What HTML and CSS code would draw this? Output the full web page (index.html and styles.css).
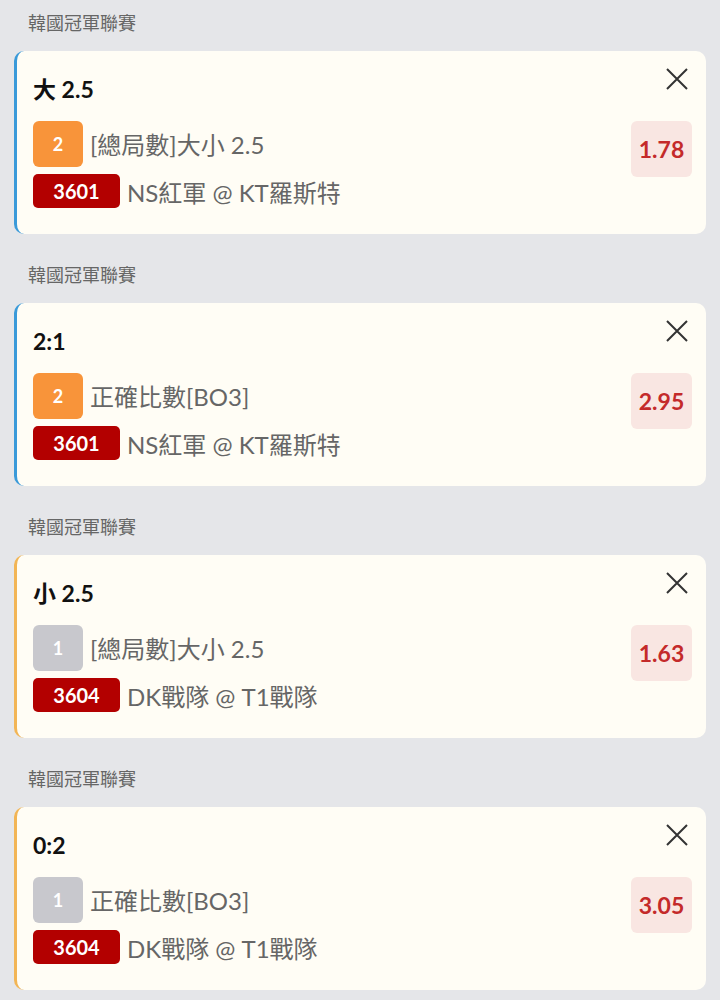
FILE: index.html
```html
<!DOCTYPE html>
<html lang="zh-Hant">
<head>
  <meta charset="UTF-8">
  <meta name="viewport" content="width=device-width, initial-scale=1.0">
  <title>投注單</title>
  <link rel="stylesheet" href="styles.css">
</head>
<body>

<div class="slip">

  <div class="league">韓國冠軍聯賽</div>
  <div class="bet-card blue">
    <div class="bet-info">
      <div class="bet-title">大 2.5</div>
      <div class="bet-row">
        <span class="count orange">2</span>
        <span class="bet-text">[總局數]大小 2.5</span>
      </div>
      <div class="bet-row">
        <span class="match-no">3601</span>
        <span class="bet-text">NS紅軍 @ KT羅斯特</span>
      </div>
    </div>
    <div class="odds">1.78</div>
    <button class="close-btn" aria-label="移除">
      <svg width="24" height="22" viewBox="0 0 24 22"><path d="M2 1 L22 21 M22 1 L2 21" stroke="#333" stroke-width="2" fill="none"/></svg>
    </button>
  </div>

  <div class="league">韓國冠軍聯賽</div>
  <div class="bet-card blue">
    <div class="bet-info">
      <div class="bet-title">2:1</div>
      <div class="bet-row">
        <span class="count orange">2</span>
        <span class="bet-text">正確比數[BO3]</span>
      </div>
      <div class="bet-row">
        <span class="match-no">3601</span>
        <span class="bet-text">NS紅軍 @ KT羅斯特</span>
      </div>
    </div>
    <div class="odds">2.95</div>
    <button class="close-btn" aria-label="移除">
      <svg width="24" height="22" viewBox="0 0 24 22"><path d="M2 1 L22 21 M22 1 L2 21" stroke="#333" stroke-width="2" fill="none"/></svg>
    </button>
  </div>

  <div class="league">韓國冠軍聯賽</div>
  <div class="bet-card yellow">
    <div class="bet-info">
      <div class="bet-title">小 2.5</div>
      <div class="bet-row">
        <span class="count grey">1</span>
        <span class="bet-text">[總局數]大小 2.5</span>
      </div>
      <div class="bet-row">
        <span class="match-no">3604</span>
        <span class="bet-text">DK戰隊 @ T1戰隊</span>
      </div>
    </div>
    <div class="odds">1.63</div>
    <button class="close-btn" aria-label="移除">
      <svg width="24" height="22" viewBox="0 0 24 22"><path d="M2 1 L22 21 M22 1 L2 21" stroke="#333" stroke-width="2" fill="none"/></svg>
    </button>
  </div>

  <div class="league">韓國冠軍聯賽</div>
  <div class="bet-card yellow">
    <div class="bet-info">
      <div class="bet-title">0:2</div>
      <div class="bet-row">
        <span class="count grey">1</span>
        <span class="bet-text">正確比數[BO3]</span>
      </div>
      <div class="bet-row">
        <span class="match-no">3604</span>
        <span class="bet-text">DK戰隊 @ T1戰隊</span>
      </div>
    </div>
    <div class="odds">3.05</div>
    <button class="close-btn" aria-label="移除">
      <svg width="24" height="22" viewBox="0 0 24 22"><path d="M2 1 L22 21 M22 1 L2 21" stroke="#333" stroke-width="2" fill="none"/></svg>
    </button>
  </div>

</div>

</body>
</html>
```

FILE: styles.css
```css
body {
  margin: 0;
  padding: 0;
  background-color: #e5e6e9;
  font-family: Lato, "Noto Sans CJK TC", sans-serif;
}
.slip {
  padding: 0 14px;
}
.league {
  height: 51px;
  line-height: 46px;
  padding-left: 14px;
  font-size: 18px;
  color: #666;
}
.bet-card {
  position: relative;
  display: flex;
  align-items: center;
  height: 183px;
  box-sizing: border-box;
  margin-bottom: 18px;
  padding: 25px 14px 26px 16px;
  background-color: #fffdf5;
  border-left: 3px solid #3a9ad9;
  border-radius: 10px;
}
.bet-card.yellow {
  border-left-color: #f2b555;
}
.bet-info {
  flex: 1;
  display: flex;
  flex-direction: column;
  gap: 7px;
}
.bet-title {
  height: 26px;
  line-height: 26px;
  font-size: 23px;
  font-weight: bold;
  color: #111;
  margin-bottom: 12px;
}
.bet-row {
  display: flex;
  align-items: center;
  gap: 7px;
}
.bet-text {
  font-size: 24px;
  color: #666;
}
.count {
  width: 50px;
  height: 46px;
  line-height: 46px;
  text-align: center;
  border-radius: 6px;
  color: #fff;
  font-size: 18px;
  font-weight: bold;
}
.count.orange {
  background-color: #f8943a;
}
.count.grey {
  background-color: #c8c8cd;
}
.match-no {
  width: 87px;
  height: 34px;
  line-height: 34px;
  text-align: center;
  border-radius: 5px;
  background-color: #b30000;
  color: #fff;
  font-size: 20px;
  font-weight: bold;
}
.odds {
  width: 61px;
  height: 56px;
  line-height: 56px;
  margin-top: 13px;
  text-align: center;
  border-radius: 6px;
  background-color: #f9e6e2;
  color: #c42a2a;
  font-size: 23px;
  font-weight: bold;
}
.close-btn {
  position: absolute;
  top: 17px;
  right: 17px;
  padding: 0;
  border: none;
  background: none;
  cursor: pointer;
}
.close-btn svg {
  display: block;
}
```
